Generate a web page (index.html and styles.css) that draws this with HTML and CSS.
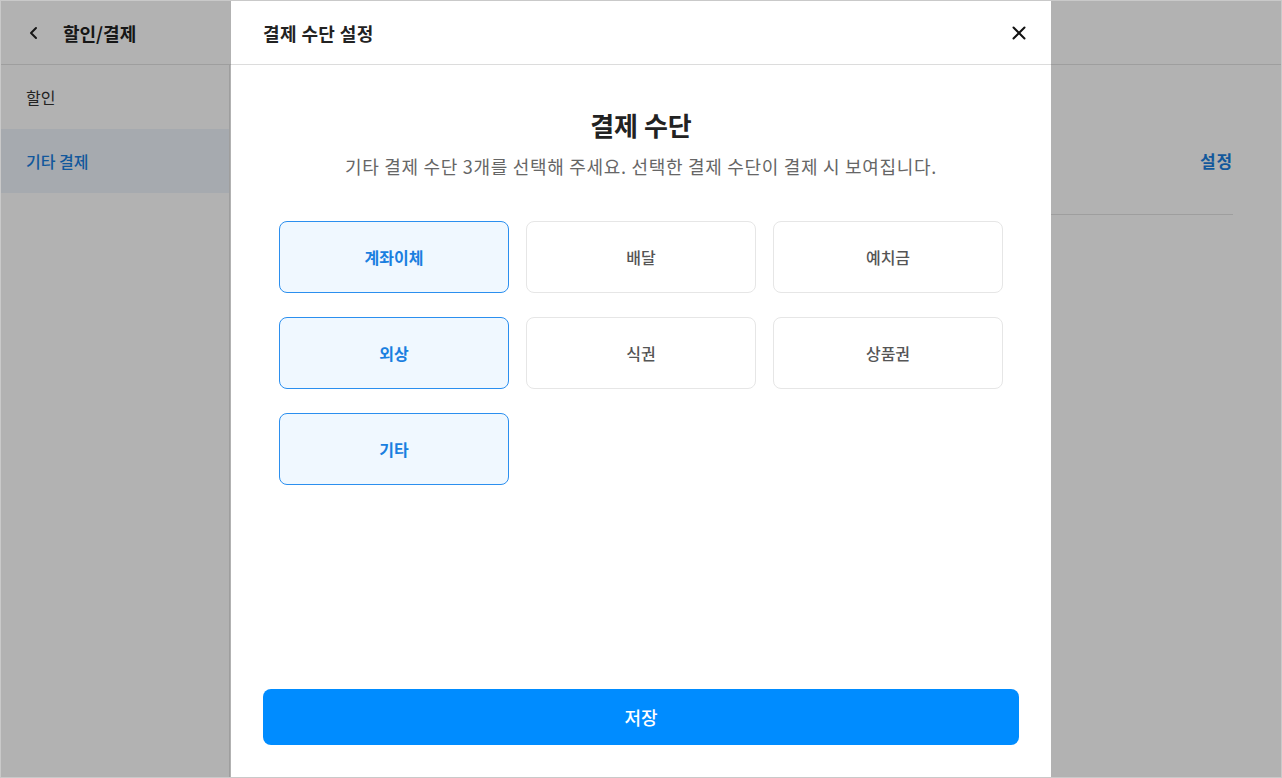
FILE: index.html
```html
<!DOCTYPE html>
<html>
<head>
  <title>할인/결제</title>
  <meta name="viewport" content="width=device-width, initial-scale=1.0">
  <link rel="stylesheet" href="styles.css">
</head>
<body>
  <div class="app">
    <header class="app-header">
      <span class="back">
        <svg width="14" height="14" viewBox="0 0 14 14"><path d="M9 2 L4 7 L9 12" fill="none" stroke="#222" stroke-width="2" stroke-linecap="round" stroke-linejoin="round"/></svg>
      </span>
      <h1>할인/결제</h1>
    </header>

    <div class="app-body">
      <nav class="sidebar">
        <div class="side-item">할인</div>
        <div class="side-item active">기타 결제</div>
      </nav>
      <main class="content">
        <div class="row">
          <a class="row-link">설정</a>
        </div>
      </main>
    </div>

    <!-- payment method modal -->
    <div class="overlay">
      <div class="modal">
        <div class="modal-header">
          <h2>결제 수단 설정</h2>
          <span class="close">
            <svg width="16" height="16" viewBox="0 0 16 16"><path d="M2.5 2.5 L13.5 13.5 M13.5 2.5 L2.5 13.5" stroke="#111" stroke-width="2" stroke-linecap="round"/></svg>
          </span>
        </div>

        <div class="modal-body">
          <h3>결제 수단</h3>
          <p class="desc">기타 결제 수단 3개를 선택해 주세요. 선택한 결제 수단이 결제 시 보여집니다.</p>

          <div class="method-grid" id="methods">
            <div class="method selected">계좌이체</div>
            <div class="method">배달</div>
            <div class="method">예치금</div>
            <div class="method selected">외상</div>
            <div class="method">식권</div>
            <div class="method">상품권</div>
            <div class="method selected">기타</div>
          </div>
        </div>

        <div class="modal-footer">
          <button class="save">저장</button>
        </div>
      </div>
    </div>
  </div>

  <script>
    // toggle methods, max 3 selected
    document.querySelectorAll('.method').forEach(m => {
      m.addEventListener('click', () => {
        if (m.classList.contains('selected')) {
          m.classList.remove('selected');
        } else if (document.querySelectorAll('.method.selected').length < 3) {
          m.classList.add('selected');
        }
      });
    });
  </script>
</body>
</html>
```

FILE: styles.css
```css
* {
  box-sizing: border-box;
}

body {
  margin: 0;
  font-family: "Noto Sans CJK KR", "Noto Sans", sans-serif;
  color: #222;
  background: #fff;
}

.app {
  position: relative;
  width: 1282px;
  height: 778px;
  border: 1px solid #c9c9c9;
  overflow: hidden;
  background: #fff;
}

.app-header {
  height: 64px;
  display: flex;
  align-items: center;
  padding-left: 26px;
  border-bottom: 1px solid #e3e3e3;
}

.back {
  display: flex;
  width: 16px;
  margin-right: 20px;
}

.app-header h1 {
  margin: 0;
  font-size: 18px;
  font-weight: 700;
}

.app-body {
  display: flex;
  height: calc(100% - 64px);
}

.sidebar {
  width: 229px;
  border-right: 1px solid #e3e3e3;
}

.side-item {
  height: 64px;
  display: flex;
  align-items: center;
  padding-left: 25px;
  font-size: 16px;
  color: #333;
}

.side-item.active {
  background: #eef4fb;
  color: #1a7fe0;
  font-weight: 500;
}

.content {
  flex: 1;
  padding: 0 48px;
}

.row {
  display: flex;
  justify-content: flex-end;
  align-items: center;
  height: 150px;
  padding-top: 42px;
  border-bottom: 1px solid #e3e3e3;
}

.row-link {
  font-size: 17px;
  font-weight: 700;
  color: #1a7fe0;
  letter-spacing: 0.8px;
}

/* Modal */
.overlay {
  position: absolute;
  top: 0;
  left: 0;
  right: 0;
  bottom: 0;
  background: rgba(0, 0, 0, 0.3);
  display: flex;
  justify-content: center;
}

.modal {
  width: 820px;
  height: 100%;
  background: #fff;
  display: flex;
  flex-direction: column;
}

.modal-header {
  height: 64px;
  flex-shrink: 0;
  display: flex;
  align-items: center;
  justify-content: space-between;
  padding: 0 24px 0 32px;
  border-bottom: 1px solid #dcdcdc;
}

.modal-header h2 {
  margin: 0;
  font-size: 18px;
  font-weight: 700;
  letter-spacing: 0.4px;
  color: #222;
}

.close {
  display: flex;
  width: 16px;
  height: 16px;
}

.modal-body {
  flex: 1;
  display: flex;
  flex-direction: column;
  align-items: center;
  padding-top: 42px;
}

.modal-body h3 {
  margin: 0;
  font-size: 26px;
  font-weight: 700;
  line-height: 36px;
  color: #222;
}

.desc {
  margin: 10px 0 0;
  font-size: 18px;
  line-height: 26px;
  letter-spacing: 0.7px;
  color: #666;
}

.method-grid {
  margin-top: 42px;
  display: grid;
  grid-template-columns: repeat(3, 230px);
  grid-auto-rows: 72px;
  column-gap: 17px;
  row-gap: 24px;
}

.method {
  display: flex;
  align-items: center;
  justify-content: center;
  border: 1px solid #e6e6e6;
  border-radius: 8px;
  font-size: 16px;
  font-weight: 500;
  color: #555;
  cursor: pointer;
}

.method.selected {
  border-color: #2b8fef;
  background: #f0f8ff;
  color: #1a7fe0;
  font-weight: 700;
}

.modal-footer {
  padding: 0 32px 32px;
}

.save {
  width: 100%;
  height: 56px;
  border: none;
  border-radius: 8px;
  background: #008cff;
  color: #fff;
  font-family: inherit;
  font-size: 18px;
  font-weight: 500;
}
```
